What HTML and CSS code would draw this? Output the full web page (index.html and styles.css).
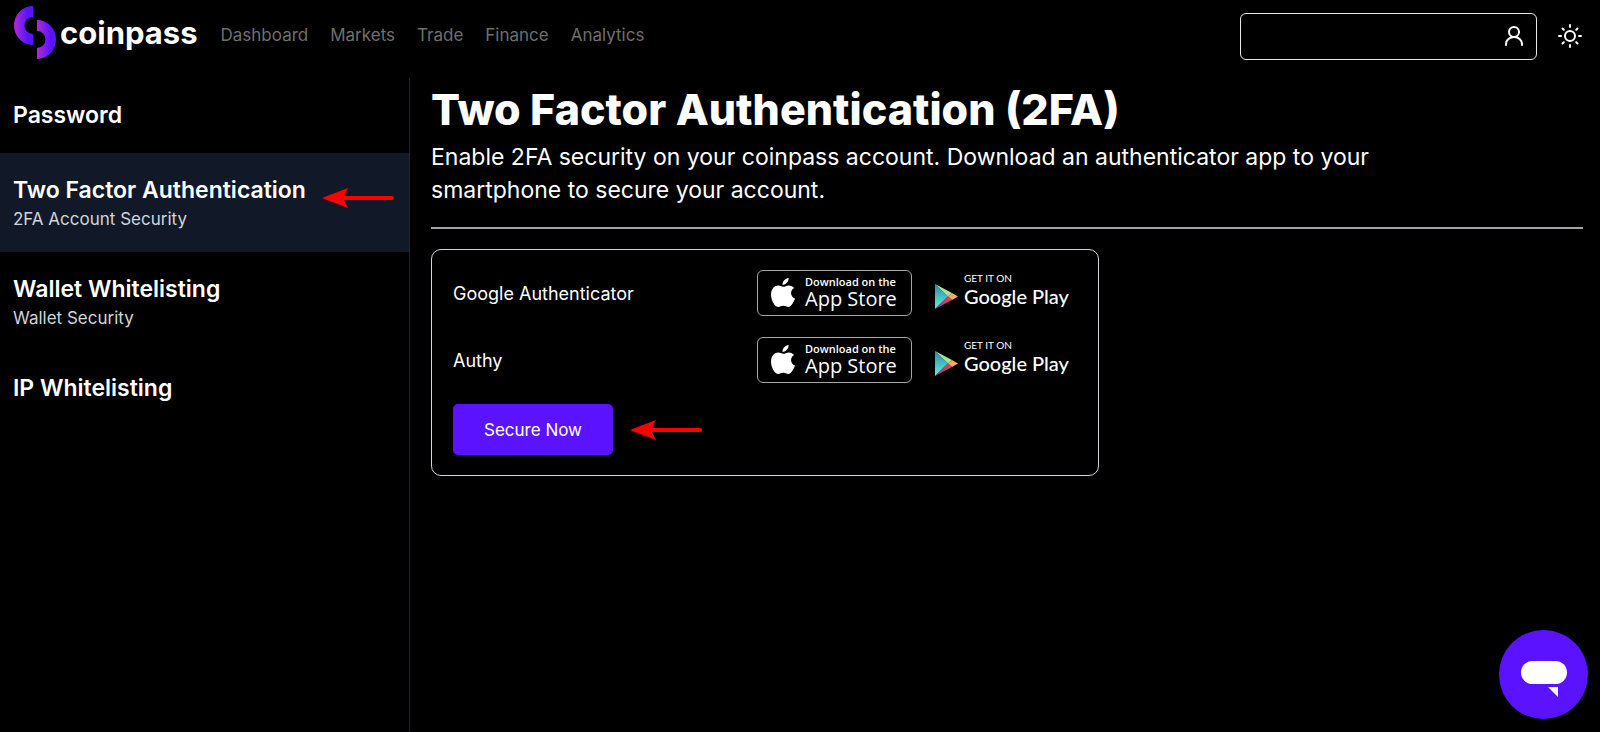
FILE: index.html
```
<!DOCTYPE html>
<html lang="en">
<head>
    <meta charset="UTF-8">
    <meta name="viewport" content="width=device-width, initial-scale=1.0">
    <title>coinpass - Two Factor Authentication</title>
    <link rel="stylesheet" href="styles.css">
</head>
<body>
    <!-- Shared shapes -->
    <svg class="defs" aria-hidden="true">
        <symbol id="arrow" viewBox="0 0 72 20">
            <path d="M0 10 26 0 22 8H70a2 2 0 0 1 0 4H22l4 8z" fill="#f00"/>
        </symbol>
        <symbol id="apple" viewBox="0 0 24 30">
            <path d="M17.6 0c.3 3.200-2.600 6.800-6.100 6.800C11.200 3.600 14.200.4 17.600 0z" fill="#fff"/>
            <path d="M12.400 8.800c1.300 0 3-1.400 5.500-1.400 2 0 4 1 5.200 2.700-4.500 2.600-3.800 8.700.9 10.500-.9 2.700-3.600 8.400-6.700 8.400-1.900 0-2.600-1.200-5-1.200s-3.200 1.200-5 1.200C4 29 0 22.500 0 16.700c0-6 3.800-9.200 7.300-9.200 2.300 0 3.800 1.300 5.100 1.300z" fill="#fff"/>
        </symbol>
        <symbol id="play" viewBox="0 0 23 25">
            <path d="M0 0v25L13 12.500z" fill="url(#playBlue)"/>
            <path d="M0 0l17 9-4 3.500z" fill="#a5e39b"/>
            <path d="M17 9l6 3.500-6 3.500-4-3.500z" fill="#fbab5f"/>
            <path d="M0 25l13-12.500 4 3.500z" fill="url(#playRed)"/>
        </symbol>
        <linearGradient id="playBlue" x1="0" y1="0" x2="0" y2="1">
            <stop offset="0" stop-color="#2f86ad"/>
            <stop offset="1" stop-color="#5cf5d0"/>
        </linearGradient>
        <linearGradient id="playRed" x1="0" y1="0" x2="1" y2="0">
            <stop offset="0" stop-color="#a32bb0"/>
            <stop offset="1" stop-color="#e8435a"/>
        </linearGradient>
    </svg>

    <!-- Header -->
    <header class="header">
        <a class="logo" href="#">
            <svg width="42" height="53" viewBox="0 0 42 53" aria-hidden="true">
                <defs>
                    <linearGradient id="logoGradient">
                        <stop offset="0" stop-color="#b32bd0"/>
                        <stop offset="0.7" stop-color="#5b13ff"/>
                    </linearGradient>
                </defs>
                <path d="M19 0v11a8.500 8.500 0 0 0 0 17v11a19 19.500 0 0 1 0-39z" fill="url(#logoGradient)"/>
                <path d="M23 14v11a8.500 8.500 0 0 1 0 17v11a19 19.500 0 0 0 0-39z" fill="url(#logoGradient)"/>
            </svg>
            <span>coinpass</span>
        </a>
        <nav class="nav">
            <a href="#">Dashboard</a>
            <a href="#">Markets</a>
            <a href="#">Trade</a>
            <a href="#">Finance</a>
            <a href="#">Analytics</a>
        </nav>
        <div class="account">
            <input type="text" aria-label="Account">
            <svg class="user-icon" width="20" height="20" viewBox="0 0 20 20" aria-hidden="true">
                <circle cx="10" cy="6" r="5"/>
                <path d="M2 19v-1a8 7 0 0 1 16 0v1"/>
            </svg>
        </div>
        <button class="theme-button" aria-label="Toggle theme">
            <svg width="26" height="26" viewBox="0 0 26 26" aria-hidden="true">
                <circle cx="13" cy="13" r="5"/>
                <path d="M13 2v2M13 22v2M2 13h2M22 13h2M5.500 5.500l1.300 1.300M19.200 19.200l1.300 1.300M5.500 20.500l1.300-1.300M19.200 6.800l1.300-1.300"/>
            </svg>
        </button>
    </header>

    <div class="layout">
        <!-- Sidebar -->
        <aside class="sidebar">
            <a class="item" href="#"><strong>Password</strong></a>
            <a class="item active" href="#">
                <strong>Two Factor Authentication</strong>
                <span>2FA Account Security</span>
                <svg class="arrow item-arrow" aria-hidden="true"><use href="#arrow"/></svg>
            </a>
            <a class="item" href="#">
                <strong>Wallet Whitelisting</strong>
                <span>Wallet Security</span>
            </a>
            <a class="item" href="#"><strong>IP Whitelisting</strong></a>
        </aside>

        <!-- Main Content Area -->
        <main class="content">
            <h1>Two Factor Authentication (2FA)</h1>
            <p class="intro">Enable 2FA security on your coinpass account. Download an authenticator app to your smartphone to secure your account.</p>
            <hr>
            <section class="card">
                <div class="app-row">
                    <span class="app-name">Google Authenticator</span>
                    <a class="app-store" href="#">
                        <svg width="24" height="30" aria-hidden="true"><use href="#apple"/></svg>
                        <span class="badge-text"><small>Download on the</small><b>App Store</b></span>
                    </a>
                    <a class="google-play" href="#">
                        <svg width="23" height="25" aria-hidden="true"><use href="#play"/></svg>
                        <span class="badge-text"><small>GET IT ON</small><b>Google Play</b></span>
                    </a>
                </div>
                <div class="app-row">
                    <span class="app-name">Authy</span>
                    <a class="app-store" href="#">
                        <svg width="24" height="30" aria-hidden="true"><use href="#apple"/></svg>
                        <span class="badge-text"><small>Download on the</small><b>App Store</b></span>
                    </a>
                    <a class="google-play" href="#">
                        <svg width="23" height="25" aria-hidden="true"><use href="#play"/></svg>
                        <span class="badge-text"><small>GET IT ON</small><b>Google Play</b></span>
                    </a>
                </div>
                <div class="action-row">
                    <button class="secure-button">Secure Now</button>
                    <svg class="arrow" aria-hidden="true"><use href="#arrow"/></svg>
                </div>
            </section>
        </main>
    </div>

    <!-- Chat launcher -->
    <button class="chat-button" aria-label="Open chat">
        <svg width="46" height="36" viewBox="0 0 46 36" aria-hidden="true">
            <rect width="46" height="23" rx="11.500" fill="#fff"/>
            <path d="M27 26h10v10z" fill="#fff"/>
        </svg>
    </button>
</body>
</html>
```
FILE: styles.css
```
* {
    box-sizing: border-box;
}

body {
    margin: 0;
    min-height: 100vh;
    display: flex;
    flex-direction: column;
    background: #000;
    color: #fff;
    font-family: Inter, sans-serif;
    font-size: 17px;
}

a {
    color: inherit;
    text-decoration: none;
}

button {
    border: none;
    padding: 0;
    background: none;
    color: #fff;
    font-family: inherit;
    cursor: pointer;
}

.defs {
    position: absolute;
    width: 0;
    height: 0;
}

/* Header */
.header {
    display: flex;
    align-items: center;
    height: 78px;
    padding: 0 17px 6px 14px;
}

.logo {
    display: flex;
    align-items: center;
    gap: 4px;
    padding-bottom: 7px;
    font-size: 31px;
    font-weight: 700;
    line-height: 53px;
}

.nav {
    display: flex;
    gap: 22px;
    margin-left: 23px;
    padding-bottom: 2px;
    color: #6f6f6f;
    line-height: 26px;
}

.account {
    position: relative;
    width: 297px;
    margin-left: auto;
}

.account input {
    display: block;
    width: 100%;
    height: 47px;
    padding: 0 48px 0 16px;
    border: 1px solid #e5e7eb;
    border-radius: 6px;
    background: #000;
    color: #fff;
    font: inherit;
}

.user-icon {
    position: absolute;
    top: 13px;
    right: 13px;
}

.user-icon,
.theme-button svg {
    display: block;
    fill: none;
    stroke: #fff;
    stroke-width: 2;
    stroke-linecap: round;
}

.theme-button {
    margin-left: 20px;
}

/* Sidebar */
.layout {
    flex: 1;
    display: flex;
}

.sidebar {
    flex: none;
    width: 410px;
    border-right: 1px solid #1f2530;
}

.item {
    position: relative;
    display: block;
    padding: 21px 13px;
}

.item strong,
.item span {
    display: block;
}

.item strong {
    font-size: 23px;
    font-weight: 600;
    line-height: 33px;
}

.item span {
    color: #d1d5db;
    font-size: 17px;
    line-height: 24px;
}

.item.active {
    background: #111827;
}

.arrow {
    width: 72px;
    height: 20px;
}

.item-arrow {
    position: absolute;
    top: 35px;
    right: 15px;
}

/* Main content */
.content {
    flex: 1;
    padding: 8px 17px 32px 21px;
}

h1 {
    margin: 0;
    font-size: 43px;
    font-weight: 800;
    line-height: 46px;
}

.intro {
    max-width: 980px;
    margin: 9px 0 20px;
    font-size: 23px;
    line-height: 33px;
}

hr {
    height: 2px;
    margin: 0 0 20px;
    border: none;
    background: #a3a5a8;
}

.card {
    display: flex;
    flex-direction: column;
    gap: 21px;
    max-width: 668px;
    padding: 20px 21px;
    border: 1px solid #d1d5db;
    border-radius: 10px;
}

.app-row,
.action-row {
    display: flex;
    align-items: center;
}

.app-name {
    flex: 1;
    font-size: 18px;
}

.app-store,
.google-play {
    display: flex;
    align-items: center;
    height: 46px;
}

.app-store {
    width: 155px;
    padding-left: 13px;
    gap: 10px;
    border: 1px solid #a6a6a6;
    border-radius: 6px;
    font-family: "Open Sans", sans-serif;
}

.google-play {
    width: 142px;
    margin-left: 23px;
    gap: 6px;
    font-family: Lato, sans-serif;
}

.google-play svg {
    margin-top: 7px;
}

.badge-text {
    display: flex;
    flex-direction: column;
    padding-bottom: 4px;
    white-space: nowrap;
}

.badge-text small {
    font-size: 11px;
    font-weight: 600;
    line-height: 15px;
}

.badge-text b {
    font-size: 20px;
    font-weight: 500;
    line-height: 20px;
}

.google-play .badge-text {
    padding-bottom: 9px;
}

.google-play small {
    font-size: 10px;
    font-weight: 400;
}

.action-row {
    gap: 17px;
}

.secure-button {
    width: 160px;
    height: 51px;
    border-radius: 5px;
    background: #5b13ff;
    font-size: 17px;
}

/* Chat launcher */
.chat-button {
    position: fixed;
    right: 12px;
    bottom: 13px;
    display: flex;
    justify-content: center;
    width: 89px;
    height: 89px;
    padding-top: 31px;
    border-radius: 50%;
    background: #5b13ff;
}
```
